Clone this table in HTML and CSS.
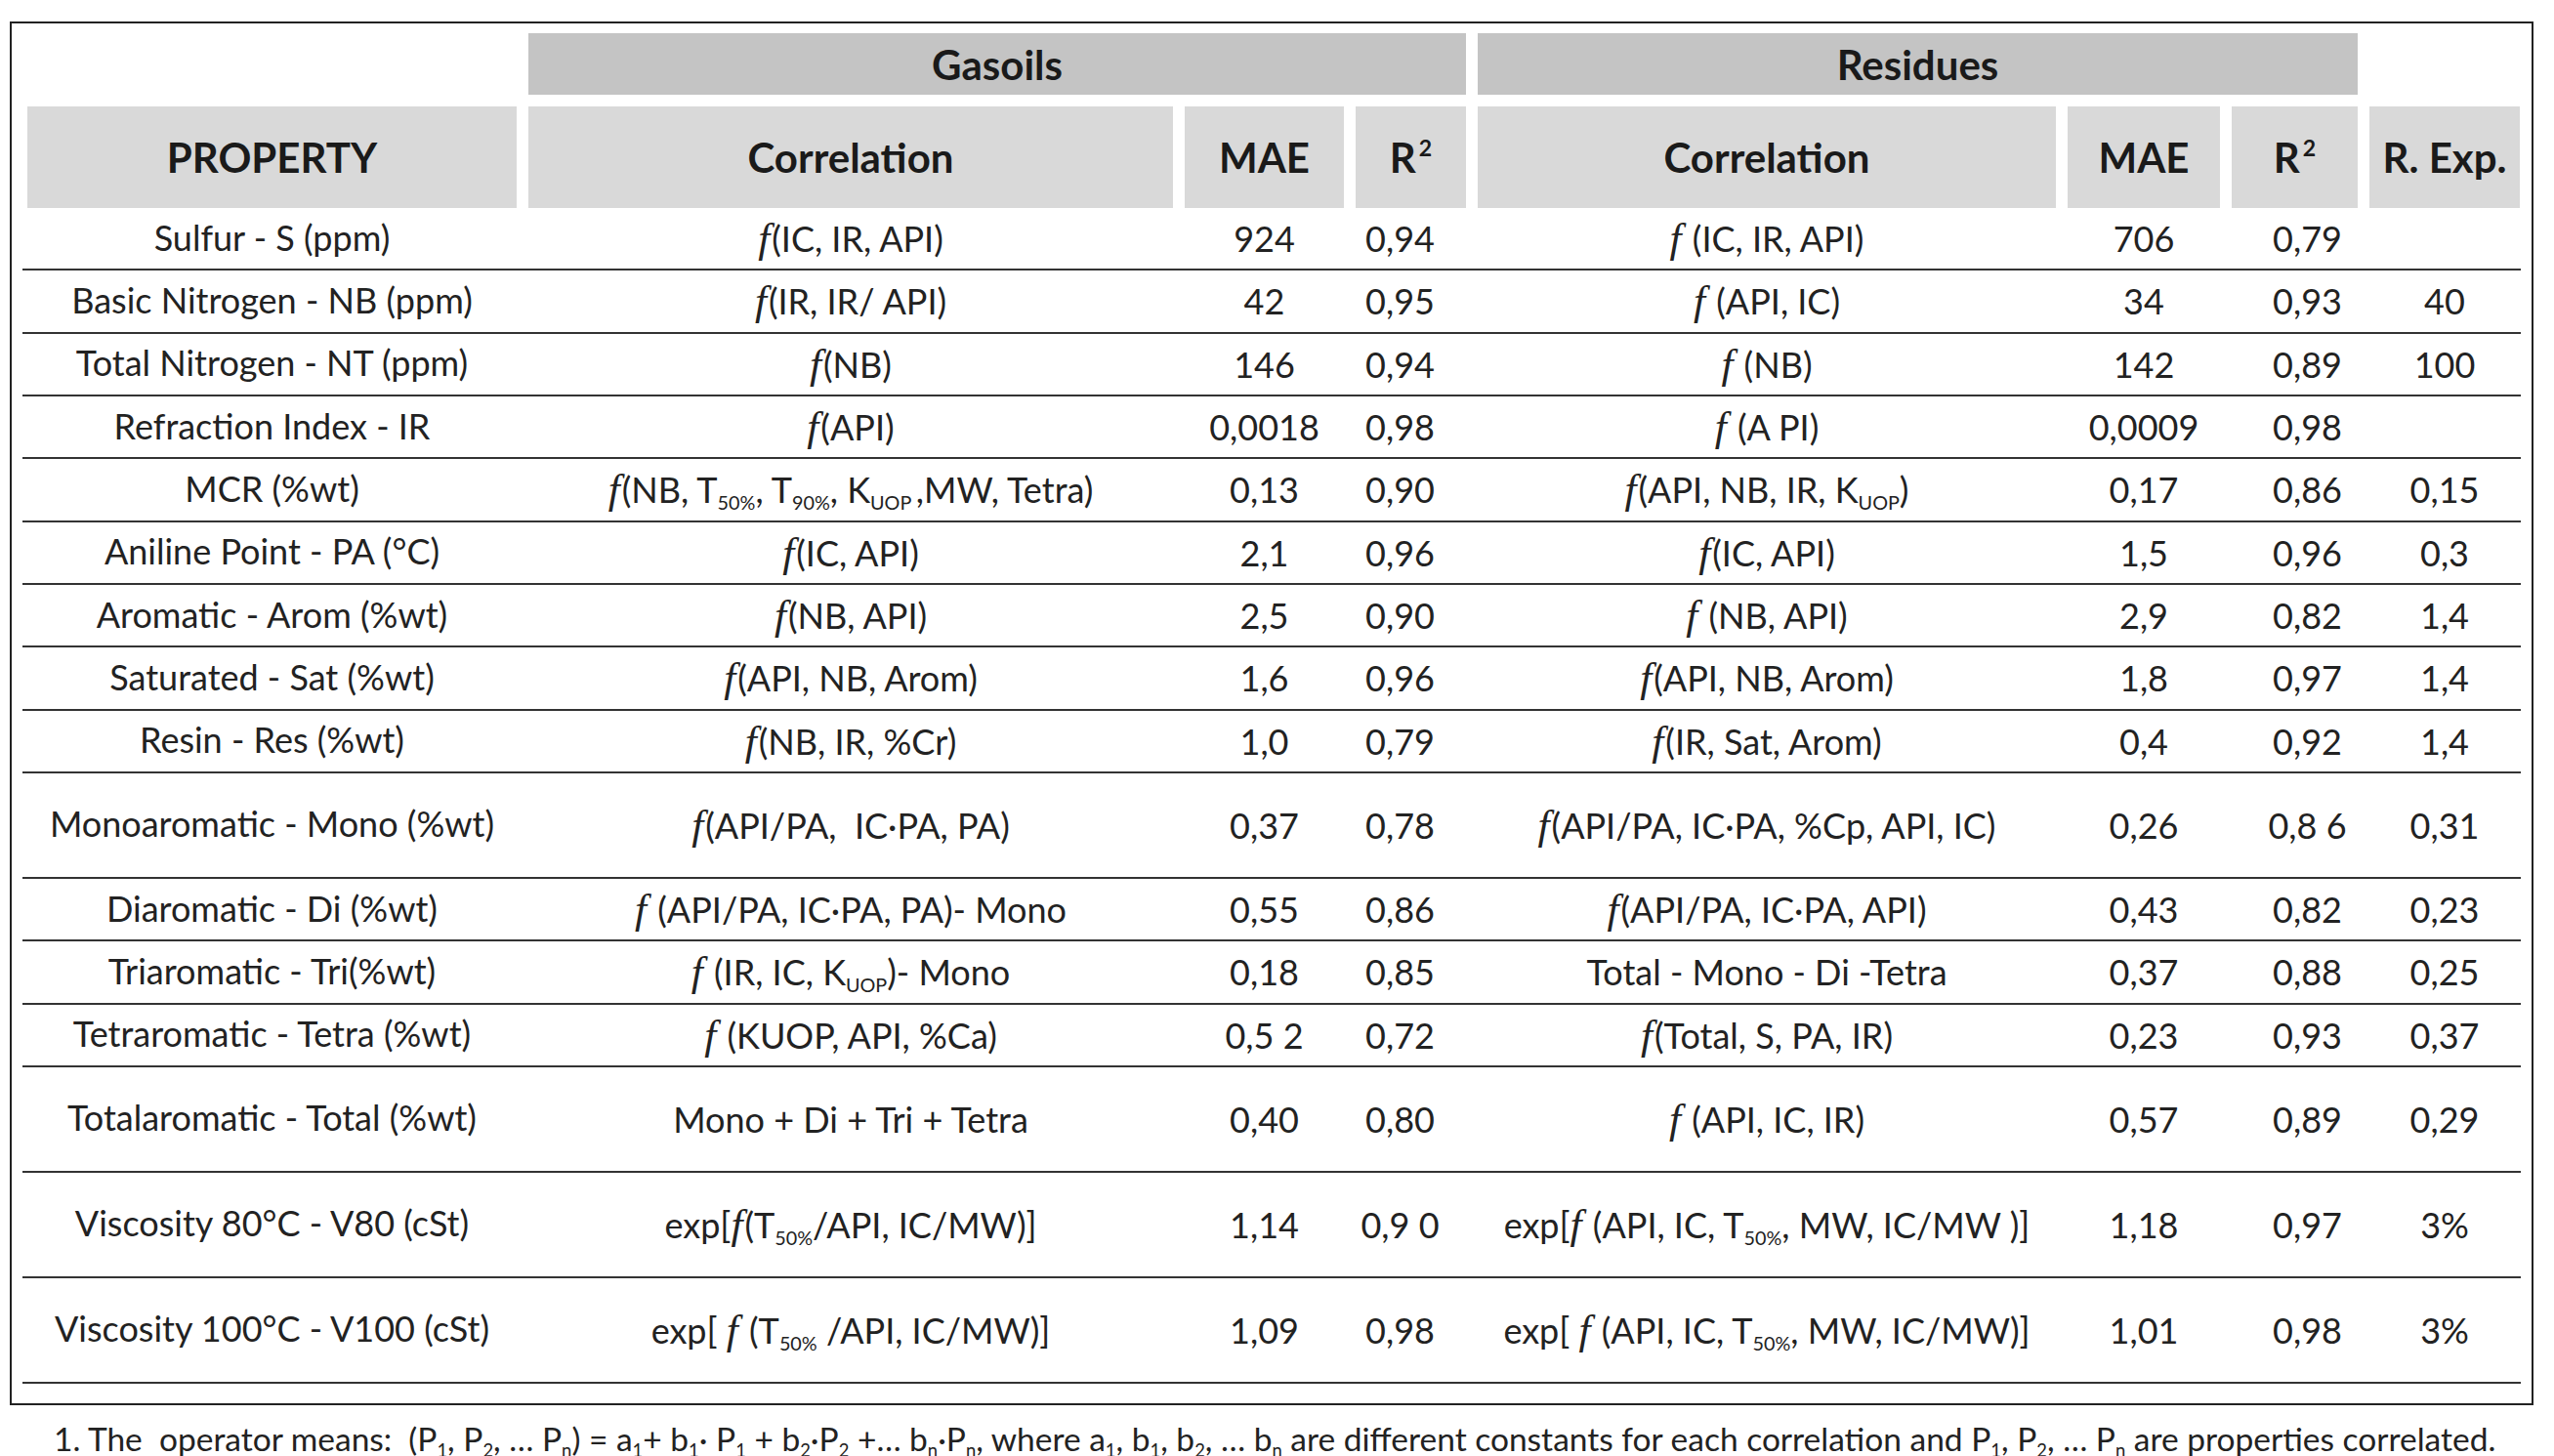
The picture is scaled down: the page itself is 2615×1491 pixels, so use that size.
FILE: index.html
```html
<!DOCTYPE html>
<html lang="en">
<head>
<meta charset="utf-8">
<title>Correlations</title>
<link rel="stylesheet" href="styles.css">
</head>
<body>
<div class="sheet">
  <div class="frame">
    <div class="grid head1">
      <div class="grp gas">Gasoils</div>
      <div class="grp res">Residues</div>
    </div>
    <div class="grid head2">
      <div class="hc">PROPERTY</div>
      <div class="hc">Correlation</div>
      <div class="hc">MAE</div>
      <div class="hc">R<sup>2</sup></div>
      <div class="hc">Correlation</div>
      <div class="hc">MAE</div>
      <div class="hc">R<sup>2</sup></div>
      <div class="hc">R. Exp.</div>
    </div>

    <div class="grid row">
      <div class="c p">Sulfur - S (ppm)</div>
      <div class="c"><i class="f">f</i>(IC, IR, API)</div>
      <div class="c m1">924</div><div class="c r1">0,94</div>
      <div class="c"><i class="f">f</i>&nbsp;(IC, IR, API)</div>
      <div class="c m2">706</div><div class="c r2">0,79</div><div class="c e"></div>
    </div>
    <div class="grid row">
      <div class="c p">Basic Nitrogen - NB (ppm)</div>
      <div class="c"><i class="f">f</i>(IR, IR/ API)</div>
      <div class="c m1">42</div><div class="c r1">0,95</div>
      <div class="c"><i class="f">f</i>&nbsp;(API, IC)</div>
      <div class="c m2">34</div><div class="c r2">0,93</div><div class="c e">40</div>
    </div>
    <div class="grid row">
      <div class="c p">Total Nitrogen - NT (ppm)</div>
      <div class="c"><i class="f">f</i>(NB)</div>
      <div class="c m1">146</div><div class="c r1">0,94</div>
      <div class="c"><i class="f">f</i>&nbsp;(NB)</div>
      <div class="c m2">142</div><div class="c r2">0,89</div><div class="c e">100</div>
    </div>
    <div class="grid row">
      <div class="c p">Refraction Index - IR</div>
      <div class="c"><i class="f">f</i>(API)</div>
      <div class="c m1">0,0018</div><div class="c r1">0,98</div>
      <div class="c"><i class="f">f</i>&nbsp;(A PI)</div>
      <div class="c m2">0,0009</div><div class="c r2">0,98</div><div class="c e"></div>
    </div>
    <div class="grid row">
      <div class="c p">MCR (%wt)</div>
      <div class="c"><i class="f">f</i>(NB, T<sub>50%</sub>, T<sub>90%</sub>, K<sub>UOP</sub>&thinsp;,MW, Tetra)</div>
      <div class="c m1">0,13</div><div class="c r1">0,90</div>
      <div class="c"><i class="f">f</i>(API, NB, IR, K<sub>UOP</sub>)</div>
      <div class="c m2">0,17</div><div class="c r2">0,86</div><div class="c e">0,15</div>
    </div>
    <div class="grid row">
      <div class="c p">Aniline Point - PA (°C)</div>
      <div class="c"><i class="f">f</i>(IC, API)</div>
      <div class="c m1">2,1</div><div class="c r1">0,96</div>
      <div class="c"><i class="f">f</i>(IC, API)</div>
      <div class="c m2">1,5</div><div class="c r2">0,96</div><div class="c e">0,3</div>
    </div>
    <div class="grid row">
      <div class="c p">Aromatic - Arom (%wt)</div>
      <div class="c"><i class="f">f</i>(NB, API)</div>
      <div class="c m1">2,5</div><div class="c r1">0,90</div>
      <div class="c"><i class="f">f</i>&nbsp;(NB, API)</div>
      <div class="c m2">2,9</div><div class="c r2">0,82</div><div class="c e">1,4</div>
    </div>
    <div class="grid row">
      <div class="c p">Saturated - Sat (%wt)</div>
      <div class="c"><i class="f">f</i>(API, NB, Arom)</div>
      <div class="c m1">1,6</div><div class="c r1">0,96</div>
      <div class="c"><i class="f">f</i>(API, NB, Arom)</div>
      <div class="c m2">1,8</div><div class="c r2">0,97</div><div class="c e">1,4</div>
    </div>
    <div class="grid row">
      <div class="c p">Resin - Res (%wt)</div>
      <div class="c"><i class="f">f</i>(NB, IR, %Cr)</div>
      <div class="c m1">1,0</div><div class="c r1">0,79</div>
      <div class="c"><i class="f">f</i>(IR, Sat, Arom)</div>
      <div class="c m2">0,4</div><div class="c r2">0,92</div><div class="c e">1,4</div>
    </div>
    <div class="grid row tall">
      <div class="c p">Monoaromatic - Mono (%wt)</div>
      <div class="c"><i class="f">f</i>(API/PA,&nbsp; IC·PA, PA)</div>
      <div class="c m1">0,37</div><div class="c r1">0,78</div>
      <div class="c"><i class="f">f</i>(API/PA, IC·PA, %Cp, API, IC)</div>
      <div class="c m2">0,26</div><div class="c r2">0,8 6</div><div class="c e">0,31</div>
    </div>
    <div class="grid row">
      <div class="c p">Diaromatic - Di (%wt)</div>
      <div class="c"><i class="f">f</i>&nbsp;(API/PA, IC·PA, PA)- Mono</div>
      <div class="c m1">0,55</div><div class="c r1">0,86</div>
      <div class="c"><i class="f">f</i>(API/PA, IC·PA, API)</div>
      <div class="c m2">0,43</div><div class="c r2">0,82</div><div class="c e">0,23</div>
    </div>
    <div class="grid row">
      <div class="c p">Triaromatic - Tri(%wt)</div>
      <div class="c"><i class="f">f</i>&nbsp;(IR, IC, K<sub>UOP</sub>)- Mono</div>
      <div class="c m1">0,18</div><div class="c r1">0,85</div>
      <div class="c">Total - Mono - Di -Tetra</div>
      <div class="c m2">0,37</div><div class="c r2">0,88</div><div class="c e">0,25</div>
    </div>
    <div class="grid row">
      <div class="c p">Tetraromatic - Tetra (%wt)</div>
      <div class="c"><i class="f">f</i>&nbsp;(KUOP, API, %Ca)</div>
      <div class="c m1">0,5 2</div><div class="c r1">0,72</div>
      <div class="c"><i class="f">f</i>(Total, S, PA, IR)</div>
      <div class="c m2">0,23</div><div class="c r2">0,93</div><div class="c e">0,37</div>
    </div>
    <div class="grid row tall">
      <div class="c p">Totalaromatic - Total (%wt)</div>
      <div class="c">Mono + Di + Tri + Tetra</div>
      <div class="c m1">0,40</div><div class="c r1">0,80</div>
      <div class="c"><i class="f">f</i>&nbsp;(API, IC, IR)</div>
      <div class="c m2">0,57</div><div class="c r2">0,89</div><div class="c e">0,29</div>
    </div>
    <div class="grid row tall">
      <div class="c p">Viscosity 80°C - V80 (cSt)</div>
      <div class="c">exp[<i class="f">f</i>(T<sub>50%</sub>/API, IC/MW)]</div>
      <div class="c m1">1,14</div><div class="c r1">0,9 0</div>
      <div class="c">exp[<i class="f">f</i>&nbsp;(API, IC, T<sub>50%</sub>, MW, IC/MW )]</div>
      <div class="c m2">1,18</div><div class="c r2">0,97</div><div class="c e">3%</div>
    </div>
    <div class="grid row tall">
      <div class="c p">Viscosity 100°C - V100 (cSt)</div>
      <div class="c">exp[ <i class="f">f</i>&nbsp;(T<sub>50%</sub> /API, IC/MW)]</div>
      <div class="c m1">1,09</div><div class="c r1">0,98</div>
      <div class="c">exp[ <i class="f">f</i>&nbsp;(API, IC, T<sub>50%</sub>, MW, IC/MW)]</div>
      <div class="c m2">1,01</div><div class="c r2">0,98</div><div class="c e">3%</div>
    </div>
  </div>
  <p class="foot">1. The&nbsp; operator means:&nbsp; (P<sub>1</sub>, P<sub>2</sub>, … P<sub>n</sub>) = a<sub>1</sub>+ b<sub>1</sub>· P<sub>1</sub> + b<sub>2</sub>·P<sub>2</sub> +… b<sub>n</sub>·P<sub>n</sub>, where a<sub>1</sub>, b<sub>1</sub>, b<sub>2</sub>, … b<sub>n</sub> are different constants for each correlation and P<sub>1</sub>, P<sub>2</sub>, … P<sub>n</sub> are properties correlated.</p>
</div>
</body>
</html>
```

FILE: styles.css
```css
html, body {
  margin: 0;
  padding: 0;
  background: #ffffff;
}

body {
  font-family: "Lato", "Noto Sans", sans-serif;
  color: #222222;
  width: 2615px;
  height: 1491px;
  overflow: hidden;
}

.sheet {
  padding-top: 22px;
}

.frame {
  box-sizing: border-box;
  margin-left: 10px;
  width: 2584px;
  border: 2px solid #222222;
  padding: 10px 11px 20px 11px;
}

.grid {
  display: grid;
  grid-template-columns: 501px 660px 163px 113px 592px 156px 129px 154px;
  column-gap: 12px;
  padding-left: 5px;
}

.head1 {
  height: 63px;
}

.grp {
  background: #c4c4c4;
  color: #1a1a1a;
  font-weight: 700;
  font-size: 42px;
  display: flex;
  align-items: center;
  justify-content: center;
}

.gas {
  grid-column: 2 / 5;
}

.res {
  grid-column: 5 / 8;
}

.head2 {
  margin-top: 12px;
  height: 104px;
}

.hc {
  background: #d9d9d9;
  color: #1a1a1a;
  font-weight: 700;
  font-size: 42px;
  display: flex;
  align-items: center;
  justify-content: center;
}

.hc sup {
  font-size: 0.55em;
  align-self: flex-start;
  margin-top: 28px;
  margin-left: 3px;
}

.row {
  height: 64.33px;
  box-sizing: border-box;
  border-bottom: 2px solid #333333;
  align-items: center;
  font-size: 36px;
}

.row.tall {
  height: 108px;
}

.c {
  text-align: center;
  white-space: nowrap;
}

.p {
  margin-top: -3px;
}

.r1 {
  padding-right: 22px;
}

.r2 {
  padding-left: 26px;
}

.f {
  font-family: "Liberation Serif", "DejaVu Serif", serif;
  font-style: italic;
  font-size: 1.2em;
  line-height: 0;
  margin-right: 2px;
}

sub {
  font-size: 0.55em;
  vertical-align: -0.35em;
  line-height: 0;
}

.foot {
  margin: 14px 0 0 55px;
  font-size: 33.5px;
  color: #222222;
  white-space: nowrap;
}

.foot sub {
  font-size: 0.55em;
  vertical-align: -0.3em;
}
```
